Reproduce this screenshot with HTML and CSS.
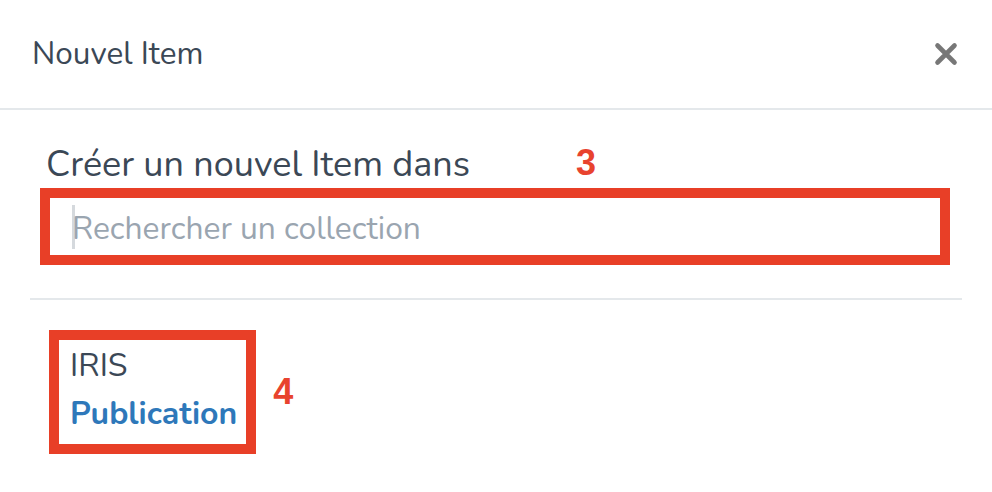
FILE: index.html
```html
<!DOCTYPE html>
<html lang="fr">
<head>
<meta charset="utf-8">
<link rel="stylesheet" href="styles.css">
</head>
<body>
<div class="modal">
  <div class="header">
    <h4 class="title">Nouvel Item</h4>
    <button class="close" aria-label="Fermer">
      <svg width="24" height="24" viewBox="0 0 24 24"><path d="M3.5 3.5 L20.5 20.5 M20.5 3.5 L3.5 20.5" stroke="#777" stroke-width="4.6" stroke-linecap="round"/></svg>
    </button>
  </div>
  <div class="body">
    <div class="search-section">
      <label class="label">Créer un nouvel Item dans</label>
      <div class="search-box">
        <span class="caret"></span>
        <span class="placeholder">Rechercher un collection</span>
      </div>
      <span class="anno anno-3">3</span>
    </div>
    <div class="list-section">
      <div class="item-box">
        <div class="item-parent">IRIS</div>
        <div class="item-name">Publication</div>
      </div>
      <span class="anno-inline">4</span>
    </div>
  </div>
</div>
</body>
</html>
```
FILE: styles.css
```css
html, body {
  margin: 0;
  padding: 0;
  background: #fff;
}
body {
  font-family: "Nunito", "Lato", "Noto Sans", sans-serif;
  color: #3b4856;
}
.modal {
  width: 992px;
  height: 492px;
  overflow: hidden;
}
.header {
  height: 110px;
  border-bottom: 2px solid #e4e8eb;
  display: flex;
  align-items: center;
  justify-content: space-between;
  padding: 0 34px 0 32px;
  box-sizing: border-box;
}
.title {
  margin: 0;
  font-size: 31.5px;
  font-weight: 400;
  line-height: 40px;
}
.close {
  border: 0;
  background: none;
  padding: 0;
  width: 24px;
  height: 24px;
  display: flex;
}
.body {
  padding: 0 30px;
}
.search-section {
  position: relative;
  padding: 33px 12px 33px 10px;
  border-bottom: 2px solid #e4e8eb;
}
.label {
  display: block;
  margin-left: 6px;
  font-size: 36px;
  line-height: 44px;
  margin-bottom: 1px;
}
.search-box {
  height: 77px;
  box-sizing: border-box;
  border: 10px solid #e83f27;
  display: flex;
  align-items: center;
  padding-left: 22px;
  padding-top: 4px;
}
.caret {
  width: 3px;
  height: 44px;
  background: #d5d9dd;
  margin-top: -4px;
}
.placeholder {
  font-size: 31.8px;
  color: #9aa5b0;
  margin-left: -3px;
}
.anno {
  position: absolute;
  color: #e8432e;
  font-family: "Liberation Sans", Arial, sans-serif;
  font-weight: 700;
  font-size: 36px;
  line-height: 1;
}
.anno-3 {
  left: 546px;
  top: 35px;
}
.list-section {
  display: flex;
  align-items: center;
  gap: 17px;
  padding: 30px 19px;
}
.item-box {
  border: 10px solid #e83f27;
  padding: 2px 9px 6px 11px;
}
.item-parent {
  font-size: 32px;
  line-height: 48px;
}
.item-name {
  font-size: 32px;
  line-height: 48px;
  font-weight: 700;
  color: #2e78ba;
}
.anno-inline {
  color: #e8432e;
  font-family: "Liberation Sans", Arial, sans-serif;
  font-weight: 700;
  font-size: 36px;
  line-height: 1;
}
```
